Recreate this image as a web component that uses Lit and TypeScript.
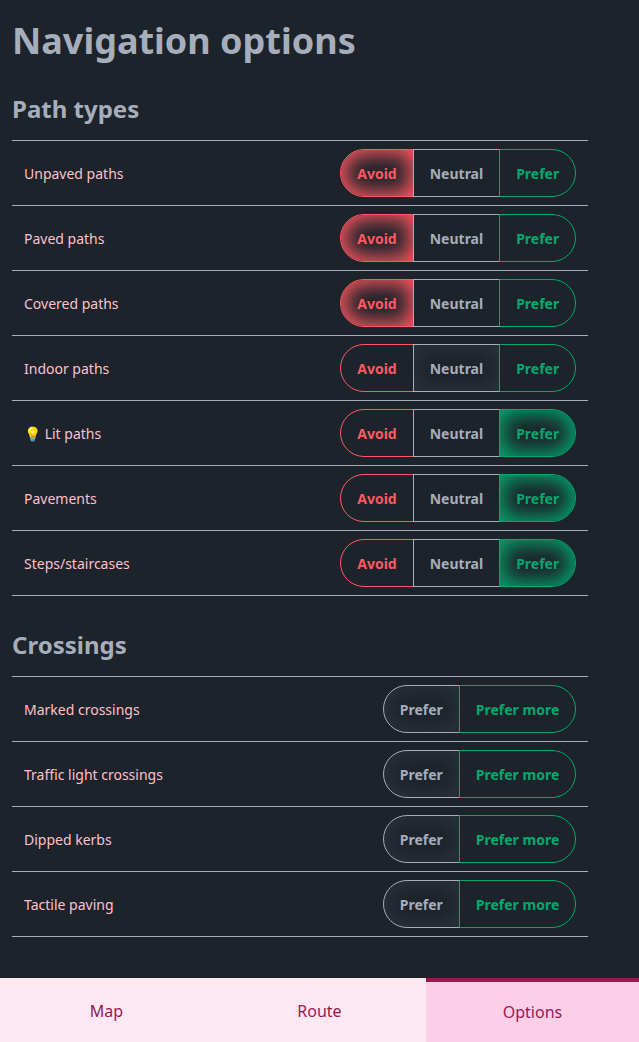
import { LitElement, html, css } from "lit";
import { customElement, property } from "lit/decorators.js";

type Tone = "avoid" | "neutral" | "prefer";
interface Choice { label: string; tone: Tone; }
interface Preference { label: string; selected: number; }

const PATH_CHOICES: Choice[] = [
  { label: "Avoid", tone: "avoid" },
  { label: "Neutral", tone: "neutral" },
  { label: "Prefer", tone: "prefer" },
];
const CROSSING_CHOICES: Choice[] = [
  { label: "Prefer", tone: "neutral" },
  { label: "Prefer more", tone: "prefer" },
];
const PATHS: Preference[] = [
  { label: "Unpaved paths", selected: 0 },
  { label: "Paved paths", selected: 0 },
  { label: "Covered paths", selected: 0 },
  { label: "Indoor paths", selected: 1 },
  { label: "💡 Lit paths", selected: 2 },
  { label: "Pavements", selected: 2 },
  { label: "Steps/staircases", selected: 2 },
];
const CROSSINGS: Preference[] = [
  { label: "Marked crossings", selected: 0 },
  { label: "Traffic light crossings", selected: 0 },
  { label: "Dipped kerbs", selected: 0 },
  { label: "Tactile paving", selected: 0 },
];

@customElement("choice-group")
export class ChoiceGroup extends LitElement {
  @property({ attribute: false }) choices: Choice[] = [];
  @property({ type: Number }) selected = 0;

  static styles = css`
    :host { display: flex; margin-right: -0.25px; }
    .choice {
      box-sizing: border-box;
      height: 48px;
      margin: 0 0 0 -1px;
      padding: 1px 16px 0;
      border: 1px solid currentColor;
      background: transparent;
      font: 700 14px/14px "Noto Sans", sans-serif;
      cursor: pointer;
    }
    .choice:first-child { margin-left: 0; border-radius: 24px 0 0 24px; }
    .choice:last-child { border-radius: 0 24px 24px 0; }
    .avoid { color: #ff5861; }
    .neutral { color: #a6adbb; }
    .prefer { color: #00a96e; }
    .selected { box-shadow: inset 0 0 20px 4px currentColor; }
    .neutral.selected { box-shadow: inset 0 0 20px 4px #2a323c; }
  `;

  render() {
    return this.choices.map((c, i) => html`<button
      class="choice ${c.tone} ${i === this.selected ? "selected" : ""}"
      @click=${() => { this.selected = i; }}
    >${c.label}</button>`);
  }
}

@customElement("app-root")
export class AppRoot extends LitElement {
  static styles = css`
    :host {
      display: flex;
      flex-direction: column;
      height: 100vh;
      overflow: hidden;
      background: #1d232a;
      color: #a6adbb;
      font: 16px/24px "Noto Sans", sans-serif;
    }
    .content { flex: 1; min-height: 0; width: 576px; padding: 21px 12px 0; }
    .title { margin: 0 0 32px; font-size: 36px; line-height: 40px; font-weight: 700; }
    .heading { margin: 0 0 15px; font-size: 24px; line-height: 32px; font-weight: 700; }
    .list { margin-bottom: 33px; border-top: 1px solid #a6adbb; }
    .row {
      display: flex;
      align-items: center;
      justify-content: space-between;
      padding: 8px 12px;
      border-bottom: 1px solid #a6adbb;
    }
    .label { padding-top: 2px; color: #ffc0cb; font-size: 14px; line-height: 20px; }
    .tabs { display: grid; grid-template-columns: repeat(3, 1fr); height: 64px; flex: none; }
    .tab {
      box-sizing: border-box;
      display: flex;
      align-items: center;
      justify-content: center;
      padding-top: 2px;
      background: #fce7f3;
      color: #9d174d;
    }
    .tab.active { padding-top: 0; border-top: 4px solid #9d174d; background: #fbcfe8; }
  `;

  private section(title: string, rows: Preference[], choices: Choice[]) {
    return html`
      <h2 class="heading">${title}</h2>
      <div class="list">
        ${rows.map((r) => html`<div class="row">
          <span class="label">${r.label}</span>
          <choice-group .choices=${choices} .selected=${r.selected}></choice-group>
        </div>`)}
      </div>`;
  }

  render() {
    return html`
      <main class="content">
        <h1 class="title">Navigation options</h1>
        ${this.section("Path types", PATHS, PATH_CHOICES)}
        ${this.section("Crossings", CROSSINGS, CROSSING_CHOICES)}
      </main>
      <nav class="tabs">
        <div class="tab">Map</div>
        <div class="tab">Route</div>
        <div class="tab active">Options</div>
      </nav>`;
  }
}
